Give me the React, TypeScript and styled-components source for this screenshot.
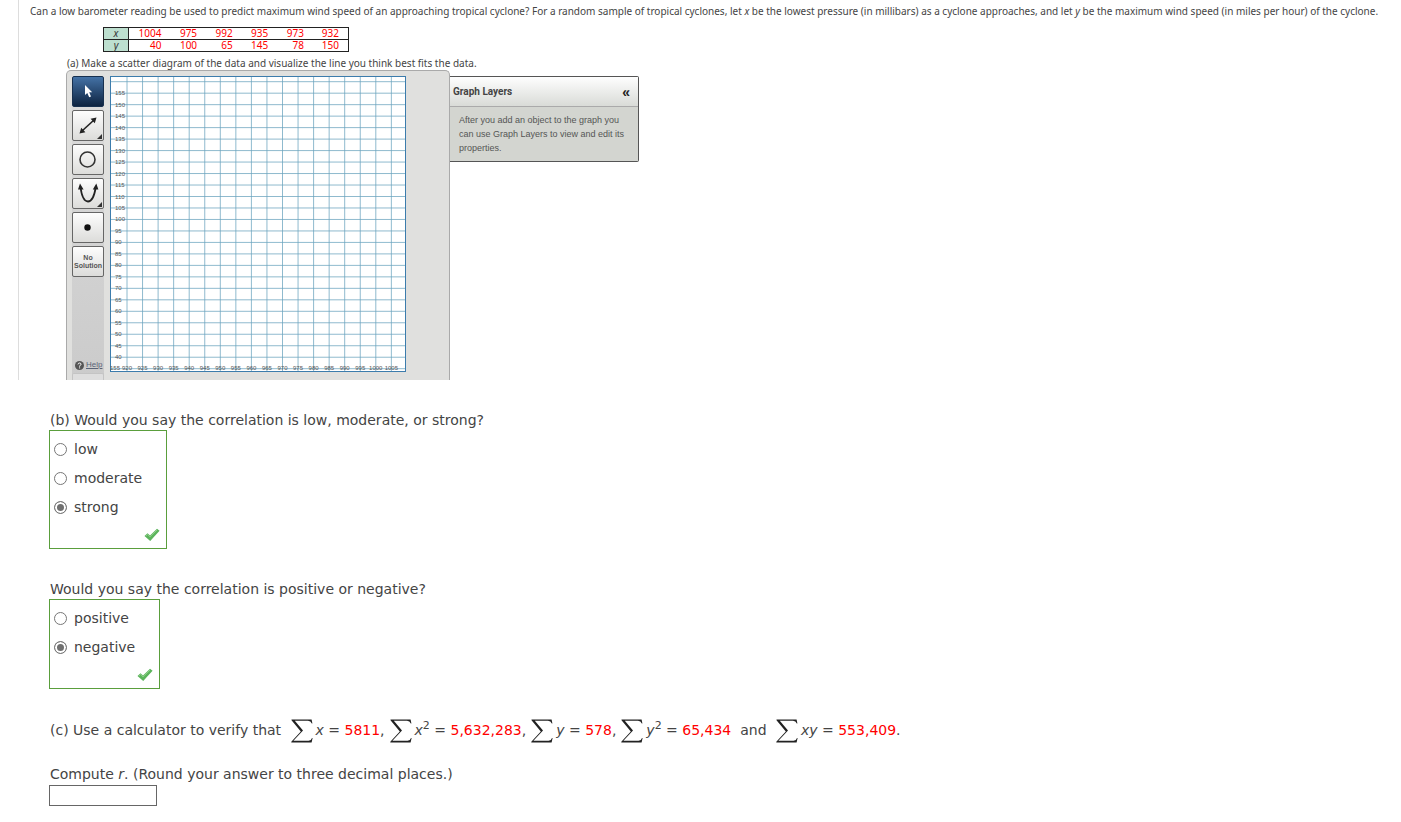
import React from "react";
import styled, { createGlobalStyle } from "styled-components";

const GlobalStyle = createGlobalStyle`
  *, *::before, *::after { box-sizing: border-box; }
  body {
    margin: 0;
    background: #fff;
    color: #444;
    font-family: "DejaVu Sans", Verdana, sans-serif;
    font-size: 14px;
    line-height: 20px;
  }
`;

const Page = styled.main`
  padding-bottom: 16px;
`;

const Problem = styled.section`
  margin-left: 18px;
  padding-left: 11px;
  border-left: 1px solid #ddd;
  font-family: "Noto Sans", Verdana, sans-serif;
  font-size: 10px;
  line-height: 12px;
`;

const Intro = styled.p`
  margin: 0;
  padding: 5px 0 10px;
  white-space: nowrap;
`;

const DataTable = styled.table`
  width: 246px;
  margin-left: 73px;
  border-collapse: collapse;
  border: 1px solid #222;
  table-layout: fixed;
  color: #f00;
`;

const DataRow = styled.tr`
  border-bottom: 1px solid #222;
`;

const RowHead = styled.th`
  width: 25px;
  padding: 0;
  border-right: 1px solid #222;
  background: #bddfcf;
  color: #333;
  font-weight: 400;
  font-style: italic;
  line-height: 11px;
`;

const Cell = styled.td<{ $wide?: boolean }>`
  width: ${(p) => (p.$wide ? "42px" : "auto")};
  padding: 0 9px 0 0;
  text-align: right;
  line-height: 11px;
`;

const PartLabel = styled.p`
  margin: 0;
  padding: 5px 0 1px 37px;
`;

const GraphTool = styled.div`
  display: flex;
  align-items: flex-start;
  margin-left: 36px;
`;

const GraphPanel = styled.div`
  display: flex;
  gap: 6px;
  padding: 5px 43px 0 5px;
  border: 1px solid #aaa;
  border-bottom: 0;
  border-radius: 5px 5px 0 0;
  background: #e0e0de;
`;

const ToolColumn = styled.div`
  display: flex;
  flex-direction: column;
  gap: 3px;
  width: 32px;
  background: linear-gradient(#dcdcdc, #cbcbcb);
`;

const ToolButton = styled.button<{ $active?: boolean }>`
  display: flex;
  align-items: center;
  justify-content: center;
  height: 31px;
  padding: 0;
  border: 1px solid ${(p) => (p.$active ? "#17304f" : "#666")};
  border-radius: 2px;
  background: ${(p) =>
    p.$active
      ? "linear-gradient(#4472a6, #0d2340)"
      : "linear-gradient(#fdfdfd, #dcdcda)"};
  color: #555;
  font: bold 7px/8px "Liberation Sans", Arial, sans-serif;
`;

const HelpLink = styled.a`
  display: flex;
  align-items: center;
  gap: 2px;
  margin-top: auto;
  padding-left: 3px;
  color: #5a6478;
  font: 8px/10px "Liberation Sans", Arial, sans-serif;
`;

const NextTool = styled.div`
  height: 7px;
  border: 1px solid #c4c4c4;
  border-bottom: 0;
  border-radius: 2px 2px 0 0;
  background: #dedede;
`;

const Plot = styled.svg`
  display: block;
  margin-bottom: 8px;
`;

const Layers = styled.aside`
  width: 189px;
  margin-top: 6px;
  border: 1px solid #555;
  border-left: 0;
  border-radius: 0 2px 2px 0;
  background: #d3d5d0;
  font-family: "Liberation Sans", Arial, sans-serif;
`;

const LayersHead = styled.header`
  display: flex;
  align-items: center;
  justify-content: space-between;
  height: 30px;
  padding: 0 8px 0 3px;
  border-bottom: 1px solid #aaa;
  background: linear-gradient(#fefefe, #d9dbd7);
`;

const LayersTitle = styled.h2`
  margin: 0;
  color: #444;
  font-family: Roboto, Arial, sans-serif;
  font-size: 10px;
  font-weight: 700;
`;

const Collapse = styled.button`
  padding: 0;
  border: 0;
  background: none;
  color: #222;
  font: bold 14px/14px "Liberation Sans", Arial, sans-serif;
`;

const LayersText = styled.p`
  margin: 0;
  padding: 6px 9px;
  color: #555;
  font-size: 9px;
  line-height: 14px;
`;

const Questions = styled.section`
  padding: 30px 0 0 49px;
`;

const Question = styled.form`
  margin-bottom: 30px;
`;

const Choices = styled.fieldset`
  display: flex;
  flex-direction: column;
  gap: 9px;
  width: fit-content;
  margin: 0;
  padding: 8px 24px 6px 4px;
  border: 1px solid #5a9e3c;
`;

const Prompt = styled.p`
  margin: 0;
  padding-left: 1px;
`;

const Choice = styled.label`
  display: flex;
  align-items: center;
  gap: 7px;
`;

const Radio = styled.input`
  appearance: none;
  width: 13px;
  height: 13px;
  margin: 0;
  border: 1px solid #777;
  border-radius: 50%;
  background: #fff;
  &:checked {
    background: #707070;
    box-shadow: inset 0 0 0 2px #fff;
  }
`;

const CheckMark = styled.svg`
  align-self: flex-end;
  margin: 2px -18px 0 0;
`;

const Formula = styled.p`
  margin: 0 0 23px;
  padding-left: 1px;
  line-height: 22px;
`;

const Sum = styled.svg`
  margin: -4px 3px -4px 5px;
  vertical-align: middle;
`;

const Value = styled.span`
  color: #f00;
`;

const Power = styled.sup`
  font-size: 11px;
  line-height: 0;
`;

const Answer = styled.input`
  display: block;
  width: 108px;
  height: 21px;
  margin-top: 1px;
  padding: 0 4px;
  border: 1px solid #666;
`;

const xs = [1004, 975, 992, 935, 973, 932];
const ys = [40, 100, 65, 145, 78, 150];

function Grid() {
  const cols = Array.from({ length: 18 }, (_, i) => 17 + i * 15.55);
  const rows = Array.from({ length: 26 }, (_, i) => 5.7 + i * 11.48);
  return (
    <Plot width="296" height="296" viewBox="0 0 296 296" role="img" aria-label="Graph">
      <rect width="296" height="296" fill="#fff" />
      {cols.map((x) => (
        <path key={x} d={`M${x} 0V296`} stroke="#6aa3bd" strokeOpacity="0.75" />
      ))}
      {rows.map((y) => (
        <path key={y} d={`M0 ${y}H296`} stroke="#6aa3bd" strokeOpacity="0.75" />
      ))}
      <rect x="0.5" y="0.5" width="295" height="295" fill="none" stroke="#3c7cac" />
      <g fill="#555" fontFamily="Liberation Sans, Arial, sans-serif" fontSize="6">
        {rows.slice(1, 25).map((y, i) => (
          <text key={y} x="5" y={y + 2}>
            {155 - i * 5}
          </text>
        ))}
        <text x="0" y="294">155</text>
        {cols.map((x, i) => (
          <text key={x} x={x} y="294" textAnchor="middle">
            {920 + i * 5}
          </text>
        ))}
      </g>
    </Plot>
  );
}

function Corner() {
  return <path d="M29 23V28H24Z" fill="#333" />;
}

function Tick() {
  return (
    <CheckMark width="16" height="14" viewBox="0 0 16 14" aria-hidden="true">
      <path d="M0.5 8L3.5 5.2L6 7.6L13 0.8L15.6 2.8L6.2 13Z" fill="#5cb45c" />
      <path d="M2 7.8L3.6 6.5L6 8.8L13 2" fill="none" stroke="#8fd08a" strokeWidth="1" />
    </CheckMark>
  );
}

function Sigma() {
  return (
    <Sum width="22" height="24" viewBox="0 0 22 24" role="img" aria-label="sum">
      <path
        d="M0.5 0.5H20.6L21.4 4.5H20.8Q19.8 1.7 17 1.7H3.8L12 11.6L2.4 21.8H17.6Q20.2 21.8 21 19H21.6L20.6 23.5H0.3V22.8L9.8 12.6L0.5 1.2Z"
        fill="#222"
      />
    </Sum>
  );
}

function RadioGroup({ name, options, chosen }: { name: string; options: string[]; chosen: string }) {
  return (
    <Choices>
      {options.map((o) => (
        <Choice key={o}>
          <Radio type="radio" name={name} value={o} defaultChecked={o === chosen} />
          {o}
        </Choice>
      ))}
      <Tick />
    </Choices>
  );
}

export default function App() {
  return (
    <Page>
      <GlobalStyle />
      <Problem>
        <Intro>
          Can a low barometer reading be used to predict maximum wind speed of an approaching tropical cyclone? For a
          random sample of tropical cyclones, let <i>x</i> be the lowest pressure (in millibars) as a cyclone
          approaches, and let <i>y</i> be the maximum wind speed (in miles per hour) of the cyclone.
        </Intro>
        <DataTable>
          <tbody>
            <DataRow>
              <RowHead scope="row">x</RowHead>
              {xs.map((v, i) => (
                <Cell key={v} $wide={i === 0}>{v}</Cell>
              ))}
            </DataRow>
            <DataRow>
              <RowHead scope="row">y</RowHead>
              {ys.map((v, i) => (
                <Cell key={v} $wide={i === 0}>{v}</Cell>
              ))}
            </DataRow>
          </tbody>
        </DataTable>
        <PartLabel>(a) Make a scatter diagram of the data and visualize the line you think best fits the data.</PartLabel>
        <GraphTool>
          <GraphPanel>
            <ToolColumn>
              <ToolButton type="button" $active aria-label="Select">
                <svg width="30" height="29" viewBox="0 0 30 29">
                  <path d="M12 8V18L14.3 16L16.2 20.2L18 19.4L16.2 15.3H19.2Z" fill="#fff" />
                </svg>
              </ToolButton>
              <ToolButton type="button" aria-label="Line">
                <svg width="30" height="29" viewBox="0 0 30 29">
                  <path d="M9 20L21 9" stroke="#222" strokeWidth="1.6" />
                  <path d="M23.5 6.5L21.8 12.3L17.6 7.8ZM6.5 22.5L8.2 16.7L12.4 21.2Z" fill="#222" />
                  <Corner />
                </svg>
              </ToolButton>
              <ToolButton type="button" aria-label="Circle">
                <svg width="30" height="29" viewBox="0 0 30 29">
                  <circle cx="14.5" cy="14.5" r="7.5" fill="none" stroke="#333" strokeWidth="1.6" />
                </svg>
              </ToolButton>
              <ToolButton type="button" aria-label="Parabola">
                <svg width="30" height="29" viewBox="0 0 30 29">
                  <path d="M7.5 8C8.5 16 11 22.5 15 22.5S21.5 16 22.8 8" fill="none" stroke="#222" strokeWidth="1.8" />
                  <path d="M7 4.5L10.6 10.5H5ZM23.3 4.5L25.4 10.5H19.8Z" fill="#222" />
                  <Corner />
                </svg>
              </ToolButton>
              <ToolButton type="button" aria-label="Point">
                <svg width="30" height="29" viewBox="0 0 30 29">
                  <circle cx="14.5" cy="14.5" r="3.2" fill="#111" />
                </svg>
              </ToolButton>
              <ToolButton type="button">
                No
                <br />
                Solution
              </ToolButton>
              <HelpLink href="#help">
                <svg width="9" height="9" viewBox="0 0 9 9" aria-hidden="true">
                  <circle cx="4.5" cy="4.5" r="4.5" fill="#555" />
                  <path d="M3 3.4Q3.2 2 4.6 2T6 3.4Q6 4.2 4.6 4.8V5.6M4.6 6.4V7.4" fill="none" stroke="#fff" />
                </svg>
                Help
              </HelpLink>
              <NextTool />
            </ToolColumn>
            <Grid />
          </GraphPanel>
          <Layers>
            <LayersHead>
              <LayersTitle>Graph Layers</LayersTitle>
              <Collapse type="button" aria-label="Collapse">«</Collapse>
            </LayersHead>
            <LayersText>After you add an object to the graph you can use Graph Layers to view and edit its properties.</LayersText>
          </Layers>
        </GraphTool>
      </Problem>
      <Questions>
        <Question>
          <Prompt>(b) Would you say the correlation is low, moderate, or strong?</Prompt>
          <RadioGroup name="strength" options={["low", "moderate", "strong"]} chosen="strong" />
        </Question>
        <Question>
          <Prompt>Would you say the correlation is positive or negative?</Prompt>
          <RadioGroup name="sign" options={["positive", "negative"]} chosen="negative" />
        </Question>
        <Formula>
          (c) Use a calculator to verify that <Sigma />
          <i>x</i> = <Value>5811</Value>,<Sigma />
          <i>x</i><Power>2</Power> = <Value>5,632,283</Value>,<Sigma />
          <i>y</i> = <Value>578</Value>,<Sigma />
          <i>y</i><Power>2</Power> = <Value>65,434</Value>&nbsp; and <Sigma />
          <i>xy</i> = <Value>553,409</Value>.
        </Formula>
        <Prompt as="label" htmlFor="r-value">
          Compute <i>r</i>. (Round your answer to three decimal places.)
        </Prompt>
        <Answer id="r-value" type="text" />
      </Questions>
    </Page>
  );
}
